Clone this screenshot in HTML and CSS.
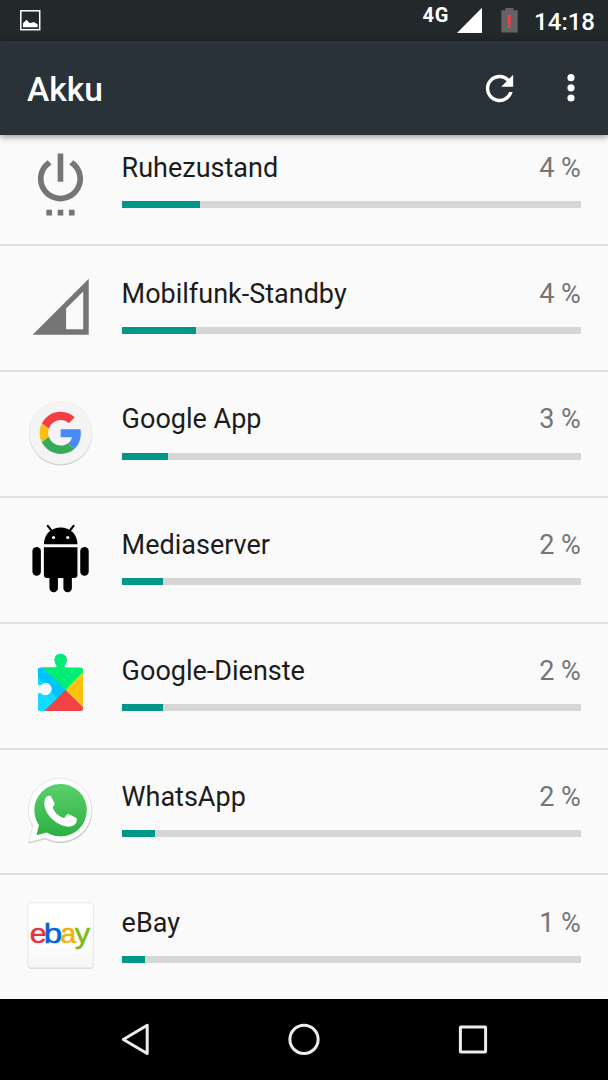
FILE: index.html
```html
<!DOCTYPE html>
<html lang="de">
<head>
<meta charset="utf-8">
<title>Akku</title>
<link rel="stylesheet" href="styles.css">
</head>
<body>
<div class="screen">
  <div class="status">
    <svg class="status-photo" viewBox="19 9 22 23" width="22" height="23">
      <rect x="20.8" y="10.8" width="18.9" height="18.9" fill="none" stroke="#fff" stroke-width="1.5"/>
      <path d="M23 27.2v-4l3.5-3.4 2.7 3 1.6.3 3-1.2 3.8 2.3v3z" fill="#fff"/>
    </svg>
    <span class="network">4G</span>
    <svg class="status-signal" viewBox="456 0 27 41" width="27" height="41"><path d="M457 33h25V7.8z" fill="#fff"/></svg>
    <svg class="status-battery" viewBox="500 0 19 41" width="19" height="41">
      <path d="M505.3 8h8.2v2.2h4.2v22.2h-16.4V10.2h4z" fill="#636363"/>
      <path d="M507.5 14.7h3.2v8.8h-3.2zM507.5 25h3.2v3h-3.2z" fill="#fb3c3c"/>
    </svg>
    <span class="clock">14:18</span>
  </div>
  <header class="appbar">
    <h1 class="title">Akku</h1>
    <svg class="refresh" viewBox="0 0 24 24" width="41" height="41"><path fill="#fff" d="M17.65 6.35A7.96 7.96 0 0 0 12 4a8 8 0 1 0 7.73 10h-2.08A6 6 0 1 1 12 6c1.66 0 3.14.69 4.22 1.78L13 11h7V4z"/></svg>
    <svg class="more" viewBox="0 0 12 30" width="12" height="30" fill="#fff"><circle cx="6" cy="4.7" r="3.6"/><circle cx="6" cy="14.8" r="3.6"/><circle cx="6" cy="25" r="3.6"/></svg>
  </header>
  <main class="viewport">
    <ul class="list">
      <li class="row">
        <svg class="icon" viewBox="10 120.6 112 125.8"><path transform="translate(26.7 147.3) scale(2.83)" fill="#757575" d="M7 24h2v-2H7v2zm4 0h2v-2h-2v2zm2-22h-2v10h2V2zm3.56 2.44l-1.45 1.45C16.84 6.94 18 8.83 18 11c0 3.31-2.69 6-6 6s-6-2.69-6-6c0-2.17 1.16-4.06 2.88-5.12L7.44 4.44C5.36 5.88 4 8.28 4 11c0 4.42 3.58 8 8 8s8-3.58 8-8c0-2.72-1.36-5.12-3.44-6.56zM15 24h2v-2h-2v2z"/></svg>
        <div class="body"><div class="line"><span class="name">Ruhezustand</span><span class="pct">4 %</span></div><div class="bar"><div class="fill" style="width:17%"></div></div></div>
      </li>
      <li class="row">
        <svg class="icon" viewBox="10 246.4 112 125.8"><path fill="#757575" fill-rule="evenodd" d="M32.7 335.2h56.3V279zM66.300 329.7V309l17.2-17.2v37.9z"/></svg>
        <div class="body"><div class="line"><span class="name">Mobilfunk-Standby</span><span class="pct">4 %</span></div><div class="bar"><div class="fill" style="width:16.1%"></div></div></div>
      </li>
      <li class="row">
        <svg class="icon" viewBox="10 371.6 112 125.8">
          <circle cx="60.8" cy="433.4" r="31.700" fill="#c4c4c4"/><circle cx="60.8" cy="432.6" r="31.8" fill="#e6e6e6"/><circle cx="60.8" cy="432.4" r="31.300" fill="#f4f4f4"/>
          <g transform="translate(39.7 411.3) scale(.881)">
            <path fill="#f04043" d="M24 0C14.620 0 6.510 5.380 2.560 13.220l7.980 6.190C12.430 13.720 17.740 9.500 24 9.500c3.540 0 6.710 1.220 9.210 3.600l6.850-6.850C35.900 2.380 30.470 0 24 0z"/>
            <path fill="#4a8af4" d="M46.980 24.550c0-1.570-.15-3.090-.38-4.550H24v9.020h12.940c-.58 2.960-2.260 5.480-4.780 7.180l7.730 6c4.510-4.180 7.090-10.360 7.090-17.650z"/>
            <path fill="#fbbf14" d="M10.530 28.590c-.48-1.450-.76-2.990-.76-4.590s.27-3.140.76-4.590l-7.980-6.190C.92 16.460 0 20.120 0 24c0 3.880.92 7.540 2.560 10.780z"/>
            <path fill="#38ab58" d="M24 48c6.480 0 11.930-2.130 15.890-5.810l-7.730-6c-2.150 1.450-4.920 2.300-8.160 2.300-6.260 0-11.570-4.220-13.470-9.910l-7.980 6.190C6.510 42.620 14.620 48 24 48z"/>
          </g>
        </svg>
        <div class="body"><div class="line"><span class="name">Google App</span><span class="pct">3 %</span></div><div class="bar"><div class="fill" style="width:10%"></div></div></div>
      </li>
      <li class="row">
        <svg class="icon" viewBox="10 498 112 125.8">
          <path d="M44 544.2C44 534 51.500 527.3 60.850 527.3S77.700 534 77.700 544.2z"/>
          <path d="M44 547.3h33.7v27.4a3.300 3.300 0 0 1-3.300 3.300H47.300a3.300 3.300 0 0 1-3.300-3.300z"/>
          <rect x="32.5" y="547" width="8.5" height="28.7" rx="4.250"/><rect x="80.5" y="547" width="8.5" height="28.7" rx="4.250"/>
          <rect x="49.6" y="570" width="8.5" height="22.4" rx="4.250"/><rect x="63.6" y="570" width="8.5" height="22.4" rx="4.250"/>
          <path d="M47.9 525.8l4 5M73.8 525.8l-4 5" stroke="#000" stroke-width="2.2" stroke-linecap="round"/>
          <circle cx="53.7" cy="537.4" r="1.600" fill="#fff"/><circle cx="68" cy="537.4" r="1.600" fill="#fff"/>
        </svg>
        <div class="body"><div class="line"><span class="name">Mediaserver</span><span class="pct">2 %</span></div><div class="bar"><div class="fill" style="width:9.1%"></div></div></div>
      </li>
      <li class="row">
        <svg class="icon" viewBox="10 623.8 112 125.8">
          <clipPath id="piece"><path d="M40.500 667.200H56.700C57.200 665.800 56.600 664.500 55.700 663.200A6.200 6.200 0 1 1 65.900 663.200C65 664.500 64.300 665.800 64.900 667.200H80.800a2.500 2.500 0 0 1 2.500 2.500V708.500a2.500 2.500 0 0 1-2.500 2.500H40.500a2.500 2.500 0 0 1-2.500-2.500V693.700C39.500 692.500 41 693.200 42 694A6.200 6.200 0 1 0 42 684C41 685 39.500 685.500 38 684.500V669.700a2.500 2.500 0 0 1 2.500-2.500z"/></clipPath>
          <g clip-path="url(#piece)">
            <path fill="#00c4ff" d="M36 650h32v64H36z"/><path fill="#12dcff" d="M37 676l20.500 22L41 714h-5z"/>
            <path fill="#00ee76" d="M42.700 667.200V650H84v21.600L65.700 689.700z"/>
            <path fill="#fcc20d" d="M84 671.600V707.700L65.700 689.700z"/>
            <path fill="#f04345" d="M65.700 689.700L84 707.700V712H43.500z"/>
          </g>
        </svg>
        <div class="body"><div class="line"><span class="name">Google-Dienste</span><span class="pct">2 %</span></div><div class="bar"><div class="fill" style="width:9.1%"></div></div></div>
      </li>
      <li class="row">
        <svg class="icon" viewBox="10 748.9 112 125.8">
          <linearGradient id="wa" x1="0" y1="0" x2="0" y2="1"><stop offset="0" stop-color="#5bd06a"/><stop offset="1" stop-color="#2bb042"/></linearGradient>
          <path transform="translate(0 .7)" fill="#c6c6c6" d="M28.500 841.800L33 825.500A32 32 0 1 1 45.500 837.500z"/>
          <path fill="#fff" stroke="#dcdcdc" stroke-width=".7" d="M28.700 841.300L33 825.200A31.800 31.800 0 1 1 45.500 837z"/>
          <path fill="url(#wa)" d="M36.600 834.200L39.100 824A26.300 26.300 0 1 1 47 831.500z"/>
          <path fill="#fff" d="M46 796.300C47.300 794.700 49.500 794.200 51.200 795L54.800 802.300C55.200 804 52.800 805.200 52.900 806.700C54.800 811.800 59 815.800 63.900 816.900C65.500 817 66.500 812.900 68.600 813L76.700 816.800C77.400 818 77 821.500 75.500 823C72.500 826 67.500 826.500 62 824.300C54 821 47 814 45 806.500C44 802.500 44.400 798.500 46 796.300z"/>
        </svg>
        <div class="body"><div class="line"><span class="name">WhatsApp</span><span class="pct">2 %</span></div><div class="bar"><div class="fill" style="width:7.2%"></div></div></div>
      </li>
      <li class="row">
        <svg class="icon" viewBox="10 875.4 112 125.8">
          <linearGradient id="tile" x1="0" y1="0" x2="0" y2="1"><stop offset=".5" stop-color="#fff"/><stop offset="1" stop-color="#f6f6f6"/></linearGradient>
          <rect x="28" y="903.7" width="65.6" height="65.5" rx="2.5" fill="#cfcfcf"/>
          <rect x="28" y="903" width="65.6" height="65.3" rx="2.5" fill="url(#tile)" stroke="#e4e4e4" stroke-width=".8"/>
          <g class="ebay">
            <text x="29.8" y="943.2" fill="#e53238" stroke="#e53238" textLength="17" lengthAdjust="spacingAndGlyphs">e</text>
            <text x="44" y="943.2" fill="#0064d2" stroke="#0064d2" textLength="18.5" lengthAdjust="spacingAndGlyphs">b</text>
            <text x="60.5" y="943.2" fill="#f5af02" stroke="#f5af02" textLength="16" lengthAdjust="spacingAndGlyphs">a</text>
            <text x="75" y="943.2" fill="#86b817" stroke="#86b817" textLength="15.5" lengthAdjust="spacingAndGlyphs">y</text>
          </g>
        </svg>
        <div class="body"><div class="line"><span class="name">eBay</span><span class="pct">1 %</span></div><div class="bar"><div class="fill" style="width:5.1%"></div></div></div>
      </li>
    </ul>
  </main>
  <nav class="nav">
    <svg viewBox="119 1023 32 33" width="32" height="33"><path d="M123.3 1039.5L147.2 1025.3V1053.5z"/></svg>
    <svg viewBox="288 1023 32 33" width="32" height="33"><circle cx="304" cy="1039.4" r="14.1"/></svg>
    <svg viewBox="457 1023 32 33" width="32" height="33"><rect x="460.4" y="1027" width="25.2" height="25" rx=".5"/></svg>
  </nav>
</div>
</body>
</html>
```
FILE: styles.css
```css
* { box-sizing: border-box; }
body { margin: 0; font-family: Roboto, "Noto Sans", sans-serif; background: #fafafa; }
svg { display: block; flex: none; }

.screen { display: flex; flex-direction: column; width: 608px; height: 1080px; overflow: hidden; }

.status { display: flex; align-items: center; flex: none; height: 41px; padding: 0 13px 0 19px; background: #23282b; color: #fff; }
.network { margin-left: auto; margin-right: 7px; padding-bottom: 12px; font-size: 20px; line-height: 24px; font-weight: 700; letter-spacing: .8px; }
.status-signal { margin-right: 17px; }
.status-battery { margin-right: 15px; }
.clock { font-size: 24px; line-height: 28px; font-weight: 500; padding-top: 2px; }

.appbar { display: flex; align-items: center; flex: none; height: 94px; padding: 0 31px 0 27px; background: #283238; color: #fff; box-shadow: 0 1px 7px rgba(0, 0, 0, .5); z-index: 1; }
.title { flex: 1; margin: 0; padding-top: 4px; font-size: 33.5px; line-height: 40px; font-weight: 500; }
.refresh { margin-right: 45px; }

.viewport { flex: none; height: 864px; overflow: hidden; background: #fafafa; }
.list { list-style: none; margin: -14.4px 0 0; padding: 0; }
.row { display: flex; height: 125.8px; padding: 0 27.2px 0 10px; border-bottom: 2px solid #dedede; }
.row:last-child { border-bottom: 0; }
.icon { width: 111.6px; height: 125.8px; }
.body { flex: 1; padding-top: 31.2px; }
.line { display: flex; justify-content: space-between; height: 49.3px; font-size: 27px; line-height: 32px; color: #1c1c1c; }
.pct { color: #757575; }
.bar { height: 7px; background: #d6d6d6; }
.fill { height: 7px; background: #009688; }
.ebay { font-family: "Liberation Sans", Arial, sans-serif; font-size: 27px; stroke-width: .5px; }

.nav { display: flex; align-items: center; justify-content: space-between; flex: 1; padding: 0 119px; background: #000; }
.nav svg { fill: none; stroke: #ececec; stroke-width: 3; stroke-linejoin: round; }
```
